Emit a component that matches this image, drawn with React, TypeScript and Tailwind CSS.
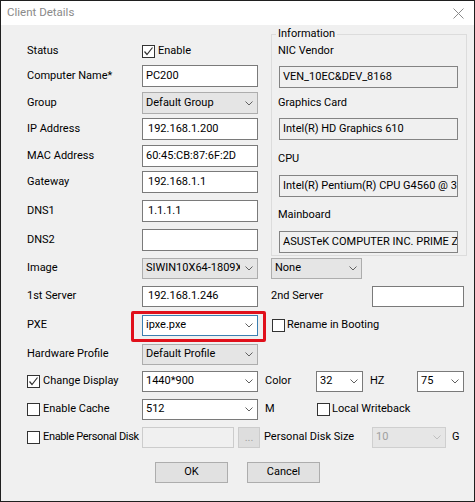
import React from "react";

type ComboKind = "list" | "edit" | "focus" | "disabled";

const comboStyle: Record<ComboKind, string> = {
  list: "bg-[#e5e5e5] border-[#adadad] text-black",
  edit: "bg-white border-[#7a7a7a] text-black",
  focus: "bg-white border-[#3c7fb1] text-black",
  disabled: "bg-[#e6e6e6] border-[#cfcfcf] text-[#a0a0a0]",
};

function Arrow({ color = "#606060" }: { color?: string }) {
  return (
    <svg width="8" height="5" viewBox="0 0 8 5" className="shrink-0">
      <polyline points="0.5,0.5 4,4 7.5,0.5" fill="none" stroke={color} strokeWidth="1" />
    </svg>
  );
}

function Combo({ value, kind, className = "" }: { value: string; kind: ComboKind; className?: string }) {
  return (
    <div className={`flex items-center h-full border ${comboStyle[kind]} ${className}`}>
      <span className="flex-1 min-w-0 overflow-hidden whitespace-nowrap pl-[3px]">{value}</span>
      <span className="w-[17px] h-full flex items-center justify-center shrink-0">
        <Arrow color={kind === "disabled" ? "#bfbfbf" : "#606060"} />
      </span>
    </div>
  );
}

function Field({
  value = "",
  readOnly = false,
  disabled = false,
  ip = false,
  className = "",
}: {
  value?: string;
  readOnly?: boolean;
  disabled?: boolean;
  ip?: boolean;
  className?: string;
}) {
  const look = disabled
    ? "bg-[#f0f0f0] border-[#cccccc]"
    : readOnly
    ? "bg-[#f0f0f0] border-[#838383]"
    : "bg-white border-[#7a7a7a]";
  return (
    <div
      className={`flex items-center h-full border overflow-hidden whitespace-nowrap ${look} ${
        ip ? "pl-[5px]" : "pl-[3px]"
      } ${className}`}
    >
      {value}
    </div>
  );
}

function Check({ checked = false }: { checked?: boolean }) {
  return (
    <span className="w-[13px] h-[13px] border border-[#333333] bg-white flex items-center justify-center shrink-0">
      {checked && (
        <svg width="11" height="11" viewBox="0 0 11 11">
          <polyline points="1.5,5.5 4,8.5 9.5,1.5" fill="none" stroke="#333333" strokeWidth="1.2" />
        </svg>
      )}
    </span>
  );
}

function Label({ children }: { children: React.ReactNode }) {
  return <span className="w-[115px] shrink-0 whitespace-nowrap">{children}</span>;
}

function CheckLabel({ children, checked = false }: { children: React.ReactNode; checked?: boolean }) {
  return (
    <span className="w-[115px] shrink-0 flex items-center whitespace-nowrap">
      <Check checked={checked} />
      <span className="ml-[3px]">{children}</span>
    </span>
  );
}

export default function App() {
  return (
    <div className="w-[475px] h-[502px] border border-[#1f1f1f] bg-[#f0f0f0] flex flex-col text-[11px] text-black font-['Roboto','Noto_Sans',sans-serif]">
      {/* title bar */}
      <div className="h-[24px] bg-white flex items-center justify-between pl-[6px] pr-[10px] shrink-0">
        <span className="text-[#8a8a8a] text-[11.5px]">Client Details</span>
        <svg width="11" height="11" viewBox="0 0 11 11">
          <path d="M0.5 0.5 L10.5 10.5 M10.5 0.5 L0.5 10.5" stroke="#8a8a8a" strokeWidth="1" />
        </svg>
      </div>

      <div className="flex-1 flex flex-col pl-[26px]">
        {/* top section */}
        <div className="flex">
          <div className="w-[231px] flex flex-col">
            <div className="flex items-center h-[20px] mt-[16px]">
              <Label>Status</Label>
              <span className="flex items-center">
                <Check checked />
                <span className="ml-[3px]">Enable</span>
              </span>
            </div>
            <div className="flex items-center h-[22px] mt-[4px]">
              <Label>Computer Name*</Label>
              <Field value="PC200" className="w-[116px]" />
            </div>
            <div className="flex items-center h-[22px] mt-[5px]">
              <Label>Group</Label>
              <Combo value="Default Group" kind="list" className="w-[116px]" />
            </div>
            <div className="flex items-center h-[22px] mt-[4px]">
              <Label>IP Address</Label>
              <Field value="192.168.1.200" ip className="w-[116px]" />
            </div>
            <div className="flex items-center h-[22px] mt-[5px]">
              <Label>MAC Address</Label>
              <Field value="60:45:CB:87:6F:2D" className="w-[116px]" />
            </div>
            <div className="flex items-center h-[22px] mt-[4px]">
              <Label>Gateway</Label>
              <Field value="192.168.1.1" ip className="w-[116px]" />
            </div>
            <div className="flex items-center h-[22px] mt-[7px]">
              <Label>DNS1</Label>
              <Field value="1.1.1.1" ip className="w-[116px]" />
            </div>
            <div className="flex items-center h-[22px] mt-[7px]">
              <Label>DNS2</Label>
              <Field className="w-[116px]" />
            </div>
          </div>

          <fieldset className="ml-[13px] mt-[1px] w-[196px] min-w-0 border border-[#dcdcdc] pl-[6px] pb-[2px]">
            <legend className="-ml-[2px] px-[2px] leading-[16px]">Information</legend>
            <div className="h-[16px] leading-[16px] mt-[1px]">NIC Vendor</div>
            <div className="h-[22px] mt-[7px] ml-[1px] w-[179px]">
              <Field value="VEN_10EC&DEV_8168" readOnly />
            </div>
            <div className="h-[16px] leading-[16px] mt-[7px]">Graphics Card</div>
            <div className="h-[22px] mt-[7px] ml-[1px] w-[179px]">
              <Field value="Intel(R) HD Graphics 610" readOnly />
            </div>
            <div className="h-[16px] leading-[16px] mt-[11px]">CPU</div>
            <div className="h-[22px] mt-[8px] ml-[1px] w-[179px]">
              <Field value="Intel(R) Pentium(R) CPU G4560 @ 3.50GHz" readOnly />
            </div>
            <div className="h-[16px] leading-[16px] mt-[10px]">Mainboard</div>
            <div className="h-[22px] mt-[8px] ml-[1px] w-[179px]">
              <Field value="ASUSTeK COMPUTER INC. PRIME Z270-A" readOnly />
            </div>
          </fieldset>
        </div>

        {/* lower rows */}
        <div className="flex items-center h-[21px] mt-[2px]">
          <Label>Image</Label>
          <Combo value="SIWIN10X64-1809X64" kind="list" className="w-[116px]" />
          <Combo value="None" kind="list" className="w-[91px] ml-[13px]" />
        </div>
        <div className="flex items-center h-[21px] mt-[7px]">
          <Label>1st Server</Label>
          <Field value="192.168.1.246" ip className="w-[116px]" />
          <span className="w-[101px] ml-[13px]">2nd Server</span>
          <Field className="w-[92px]" />
        </div>
        <div className="flex items-center h-[21px] mt-[8px]">
          <Label>PXE</Label>
          <div className="relative w-[116px] h-full">
            <Combo value="ipxe.pxe" kind="focus" />
            <div className="absolute -left-[11px] -right-[8px] -top-[4px] -bottom-[6px] border-[3px] border-[#e0101b] rounded-[2px]" />
          </div>
          <span className="ml-[14px] flex items-center">
            <Check />
            <span className="ml-[2px]">Rename in Booting</span>
          </span>
        </div>
        <div className="flex items-center h-[21px] mt-[8px]">
          <Label>Hardware Profile</Label>
          <Combo value="Default Profile" kind="list" className="w-[116px]" />
        </div>
        <div className="flex items-center h-[21px] mt-[6px]">
          <CheckLabel checked>Change Display</CheckLabel>
          <Combo value="1440*900" kind="edit" className="w-[116px]" />
          <span className="w-[51px] ml-[7px]">Color</span>
          <Combo value="32" kind="edit" className="w-[47px]" />
          <span className="w-[47px] ml-[7px]">HZ</span>
          <Combo value="75" kind="edit" className="w-[47px]" />
        </div>
        <div className="flex items-center h-[21px] mt-[7px]">
          <CheckLabel>Enable Cache</CheckLabel>
          <Combo value="512" kind="edit" className="w-[116px]" />
          <span className="w-[52px] ml-[7px]">M</span>
          <Check />
          <span className="ml-[2px]">Local Writeback</span>
        </div>
        <div className="flex items-center h-[21px] mt-[7px]">
          <CheckLabel>
            <span className="tracking-[-0.35px]">Enable Personal Disk</span>
          </CheckLabel>
          <Field disabled className="w-[92px]" />
          <span className="w-[22px] h-full ml-[4px] border border-[#cccccc] bg-[#dedede] text-[#a0a0a0] flex items-center justify-center leading-none">
            ...
          </span>
          <span className="w-[108px] ml-[4px] whitespace-nowrap">Personal Disk Size</span>
          <Combo value="10" kind="disabled" className="w-[74px]" />
          <span className="ml-[6px]">G</span>
        </div>

        <div className="flex h-[21px] mt-[14px] pl-[128px] gap-[19px]">
          <button className="w-[73px] h-full border border-[#adadad] bg-[#e1e1e1]">OK</button>
          <button className="w-[73px] h-full border border-[#adadad] bg-[#e1e1e1]">Cancel</button>
        </div>
      </div>
    </div>
  );
}
